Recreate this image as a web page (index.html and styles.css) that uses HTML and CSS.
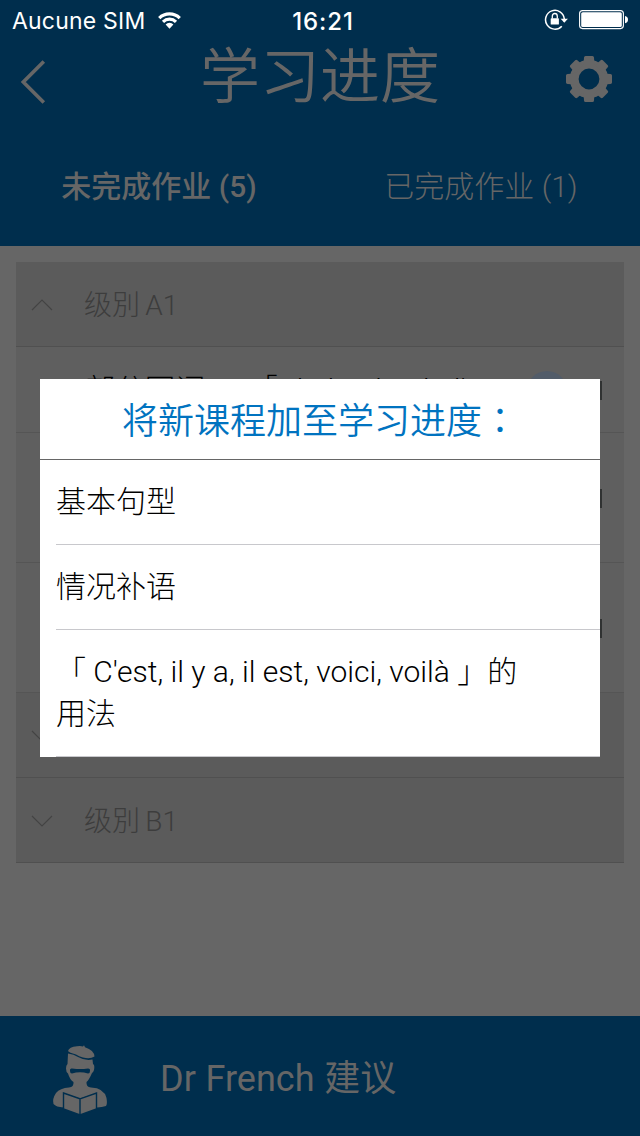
FILE: index.html
```html
<!DOCTYPE html>
<html lang="zh-CN">
<head>
<meta charset="utf-8">
<title>学习进度</title>
<link rel="stylesheet" href="styles.css">
</head>
<body>
<div class="screen">
  <header class="header">
    <div class="status">
      <div class="status-left">
        <span class="carrier">Aucune SIM</span>
        <svg class="wifi" width="25" height="19" viewBox="0 0 26 20">
          <path d="M1 6.2A17.2 17.2 0 0 1 25 6.2L22.6 8.6A13.6 13.6 0 0 0 3.4 8.6Z"/>
          <path d="M5 10.2A11.5 11.5 0 0 1 21 10.2L18.7 12.5A8.2 8.2 0 0 0 7.3 12.5Z"/>
          <path d="M8.9 14.1A5.9 5.9 0 0 1 17.1 14.1L13 18.6Z"/>
        </svg>
      </div>
      <span class="clock">16:21</span>
      <div class="status-right">
        <svg width="24" height="22" viewBox="0 0 24 22">
          <path d="M20.300 12.5V9.8A9.4 9.4 0 1 0 17.8 17.2" fill="none" stroke="#fff" stroke-width="1.5"/>
          <path d="M16.7 9.7h7.2l-3.6 4z" fill="#fff"/>
          <rect x="6.7" y="9.3" width="8.2" height="6.2" rx=".6" fill="#fff"/>
          <path d="M8.3 9.5V7.2a2.5 2.7 0 0 1 5 0v2.3" fill="none" stroke="#fff" stroke-width="1.3"/>
        </svg>
        <svg width="49" height="20" viewBox="0 0 49 20">
          <rect x=".6" y=".6" width="43.8" height="18" rx="3" fill="none" stroke="#fff" stroke-width="1.1"/>
          <rect x="2.2" y="2.2" width="40.6" height="14.8" rx="1.6" fill="#fff"/>
          <path d="M46 6q3 .5 3 3.6t-3 3.6z" fill="#fff"/>
        </svg>
      </div>
    </div>
    <div class="navbar">
      <svg class="back" width="26" height="44" viewBox="0 0 26 44"><path d="M23.800 1.500L3.300 22 23.800 42.500"/></svg>
      <h1 class="title">学习进度</h1>
      <svg class="gear" width="46" height="46" viewBox="-23 -23 46 46">
        <defs><path id="tooth" d="M-5.500-14L-5-21.500Q-4.900-23-3.500-23H3.500Q4.900-23 5-21.500L5.500-14Z"/></defs>
        <circle r="14.8" fill="none" stroke="#666" stroke-width="8.800"/>
        <use href="#tooth"/><use href="#tooth" transform="rotate(45)"/><use href="#tooth" transform="rotate(90)"/><use href="#tooth" transform="rotate(135)"/>
        <use href="#tooth" transform="rotate(180)"/><use href="#tooth" transform="rotate(225)"/><use href="#tooth" transform="rotate(270)"/><use href="#tooth" transform="rotate(315)"/>
      </svg>
    </div>
    <nav class="tabs">
      <span class="tab tab-active">未完成作业 (5)</span>
      <span class="tab">已完成作业 (1)</span>
    </nav>
  </header>

  <main class="content">
    <div class="level">
      <svg class="chev" width="22" height="12" viewBox="0 0 22 12"><path d="M1 11L11 1l10 10"/></svg>
      <span class="level-name">级別 A1</span>
    </div>
    <div class="lesson lesson-short">
      <span class="lesson-name">部分冠词<span class="colon" lang="zh-TW">：</span> 「 de la, du, de l'</span>
      <span class="badge"></span>
      <span class="mark"></span>
    </div>
    <div class="lesson"><span class="mark"></span></div>
    <div class="lesson"><span class="mark"></span></div>
    <div class="level">
      <svg class="chev" width="22" height="12" viewBox="0 0 22 12"><path d="M1 1l10 10L21 1"/></svg>
    </div>
    <div class="level">
      <svg class="chev" width="22" height="12" viewBox="0 0 22 12"><path d="M1 1l10 10L21 1"/></svg>
      <span class="level-name">级別 B1</span>
    </div>
  </main>

  <footer class="footer">
    <svg class="doctor" width="56" height="72" viewBox="0 0 56 72">
      <path fill="#666" d="M16 7Q17 3 25 2.200Q29 1.700 31 2.500L32 1.200L33 3.200Q42 6 42.500 12.500Q38 15.500 31 13.500Q27 12.500 24 10.500Q17 8.500 16 7Z"/>
      <path fill="#666" d="M16 9.500Q22 10 26 13Q33 17 40.500 15.500L41 20Q43 21 42 26Q41 29 40 29Q37 36 34.500 38Q34 43 39 43.500Q52 44 54.500 54Q55.500 60 54 62Q50 63 45 63.500V49L28 54.500L11.500 49V63.500Q4 63 1.500 60Q0 55 4 49Q8 44 17 43.500Q22 43 21.500 38Q18 36 16 29.500Q14 28 14 24.500Q14 21 15.500 20Z"/>
      <path fill="#002e4d" d="M18 27Q17.500 24 20 24.500Q25 25 28 25Q32 25 36 24.500Q38.500 24.500 38 27Q38 29.500 36 29.500Q32 28.300 28 28.300Q24 28.300 20 29.500Q18 29.500 18 27Z"/>
      <path fill="#666" stroke="#002e4d" stroke-width="1.400" d="M11.500 49L28 54.800V71L11.500 65ZM28 54.800L44.500 49V65L28 71Z"/>
    </svg>
    <span class="footer-text">Dr French 建议</span>
  </footer>

  <section class="dialog">
    <h2 class="dialog-title">将新课程加至学习进度<span class="colon" lang="zh-TW">：</span></h2>
    <ul class="options">
      <li class="option">基本句型</li>
      <li class="option">情况补语</li>
      <li class="option">「 C'est, il y a, il est, voici, voilà 」的<br>用法</li>
    </ul>
  </section>
</div>
</body>
</html>
```

FILE: styles.css
```css
* { box-sizing: border-box; }
body { margin: 0; }
.screen {
  position: relative;
  width: 640px;
  height: 1136px;
  overflow: hidden;
  display: flex;
  flex-direction: column;
  background: #666;
  font-family: Roboto, "Noto Sans CJK SC", sans-serif;
  font-weight: 300;
}
.header { height: 246px; background: #002e4d; color: #666; }
.status {
  height: 40px;
  padding: 0 12px 0 12px;
  display: grid;
  grid-template-columns: 1fr auto 1fr;
  align-items: center;
  color: #fff;
  font-family: Inter, sans-serif;
  font-weight: 400;
  font-size: 23px;
}
.status-left { display: flex; align-items: center; gap: 12px; }
.carrier { padding-top: 2px; letter-spacing: 0.2px; white-space: nowrap; }
.wifi { fill: #fff; }
.clock { padding: 2px 0 0 6px; font-size: 24px; font-weight: 500; letter-spacing: 0.9px; }
.status-right { display: flex; align-items: center; justify-content: flex-end; gap: 11px; }
.navbar {
  height: 88px;
  padding: 0 28px 0 20px;
  display: flex;
  justify-content: space-between;
}
.back { margin-top: 20px; fill: none; stroke: #666; stroke-width: 3.6; }
.title {
  margin: 0 0 0 28px;
  padding-top: 2px;
  font-size: 60px;
  line-height: 72px;
  font-weight: 350;
}
.gear { margin-top: 16px; fill: #666; }
.tabs { display: grid; grid-template-columns: 1fr 1fr; text-align: center; }
.tab { padding-left: 2px; font-size: 30px; line-height: 118px; }
.tab-active { padding: 0 2px 0 0; font-weight: 500; }
.content { flex: 1; padding: 16px 16px 0; }
.level {
  height: 85px;
  padding: 0 15px;
  display: flex;
  align-items: center;
  gap: 31px;
  background: #5b5b5b;
  border-bottom: 1px solid #505050;
  color: #3d3d3d;
  font-size: 28px;
}
.level-name { padding-bottom: 2px; word-spacing: -1.5px; }
.chev { margin-top: 2px; fill: none; stroke: #444; stroke-width: 1.2; }
.lesson {
  height: 130px;
  padding: 2px 22px 0 0;
  display: flex;
  align-items: center;
  justify-content: flex-end;
  background: #5f5f5f;
  border-bottom: 1px solid #555;
}
.lesson-short { height: 86px; padding-left: 69px; }
.lesson-name {
  flex: 1;
  padding-bottom: 7px;
  color: #000;
  font-size: 30px;
  white-space: nowrap;
  text-spacing-trim: space-all;
  word-spacing: 1.5px;
}
.lesson-name .colon { margin-right: 4px; }
.badge { width: 40px; height: 40px; margin-right: 33px; border-radius: 50%; background: #525c69; }
.mark { width: 2px; height: 19px; background: #303232; }
.footer {
  height: 120px;
  padding: 0 0 0 52px;
  display: flex;
  align-items: center;
  gap: 52px;
  background: #002e4d;
  color: #666;
}
.doctor { margin-top: 8px; }
.footer-text { padding-bottom: 3px; font-size: 36px; font-weight: 400; word-spacing: 0.8px; }
.dialog {
  position: absolute;
  left: 40px;
  top: 379px;
  width: 560px;
  height: 378px;
  background: #fff;
  color: #000;
}
.dialog-title {
  height: 81px;
  margin: 0;
  padding: 2px 0 0 82px;
  border-bottom: 1px solid #666;
  color: #0073c0;
  font-size: 36px;
  font-weight: 350;
  line-height: 82px;
  white-space: nowrap;
}
.colon { font-family: "Noto Sans CJK TC", sans-serif; line-height: 1; }
.options { margin: 0; padding: 0 0 0 16px; list-style: none; }
.option {
  padding: 21px 0;
  border-bottom: 1px solid #c8c8cc;
  font-size: 30px;
  line-height: 42px;
  white-space: nowrap;
}
```
